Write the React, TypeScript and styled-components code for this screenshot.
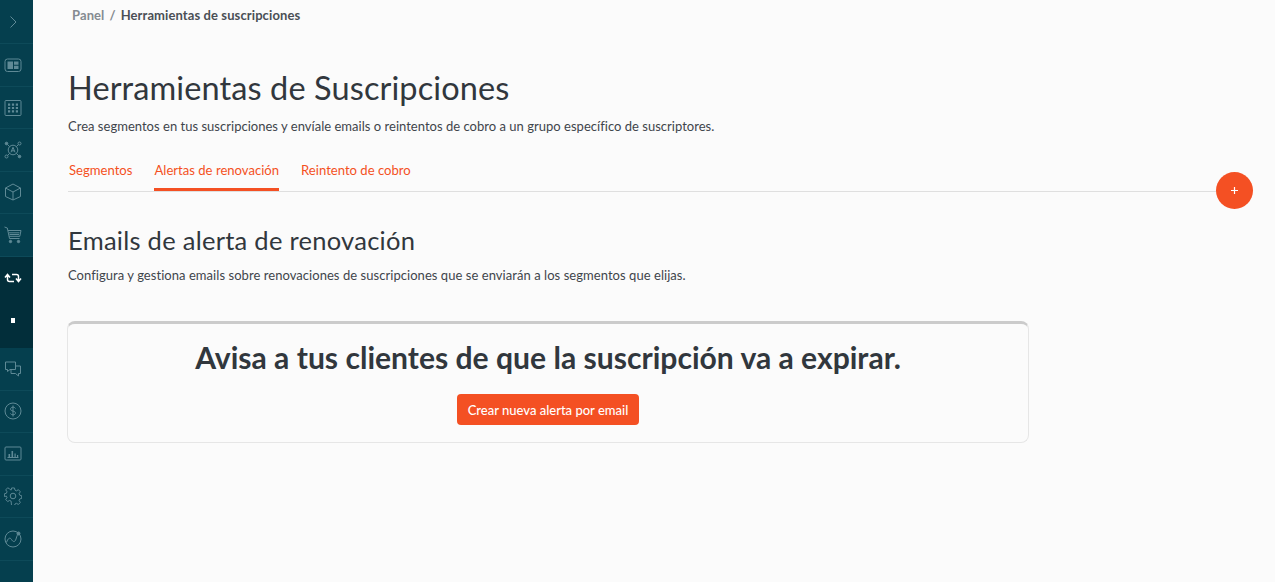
import React from 'react'
import styled, { createGlobalStyle } from 'styled-components'

const GlobalStyle = createGlobalStyle`
  html, body {
    margin: 0;
    padding: 0;
    height: 100%;
    background: #fbfbfb;
    font-family: "Lato", "Open Sans", sans-serif;
  }
  * { box-sizing: border-box; }
`

const Page = styled.div`
  display: flex;
  width: 1275px;
  height: 582px;
  overflow: hidden;
  background: #fbfbfb;
`

const Sidebar = styled.nav`
  flex: 0 0 33px;
  display: flex;
  flex-direction: column;
  background: #053f4e;
`

const NavItem = styled.div<{ $h?: number }>`
  flex: 0 0 ${_ => _.$h ?? 42.5}px;
  display: flex;
  align-items: center;
  justify-content: center;
  padding-right: 8px;
  border-bottom: 1px solid #0d4a59;
  color: #5f8a96;
`

const ActiveGroup = styled.div`
  flex: 0 0 91px;
  display: flex;
  flex-direction: column;
  background: #022e3a;
  color: #fff;
`

const ActiveItem = styled.div`
  flex: 0 0 42px;
  display: flex;
  align-items: center;
  justify-content: center;
  padding-right: 8px;
`

const Dot = styled.span`
  width: 4px;
  height: 5px;
  background: #fff;
`

const Main = styled.main`
  flex: 1;
  min-width: 0;
  padding: 0 59px 0 35px;
`

const Breadcrumb = styled.div`
  height: 30px;
  padding-left: 4px;
  display: flex;
  align-items: center;
  gap: 5px;
  font-size: 13px;
  font-weight: 700;
  letter-spacing: 0.1px;
  color: #4a4f55;
`

const Crumb = styled.span`
  color: #858b91;
`

const Title = styled.h1`
  margin: 35px 0 0;
  font-size: 32.5px;
  line-height: 46px;
  font-weight: 400;
  letter-spacing: 0.1px;
  color: #31373d;
`

const Lead = styled.p`
  margin: 6px 0 0;
  font-size: 13px;
  line-height: 18px;
  letter-spacing: 0.02px;
  color: #3f454b;
`

const TabBar = styled.div`
  position: relative;
  margin-top: 18px;
  height: 39px;
  display: flex;
  gap: 22px;
  border-bottom: 1px solid #dfdfdf;
  padding-left: 1px;
`

const Tab = styled.a<{ $active?: boolean }>`
  height: 38px;
  padding-top: 8px;
  font-size: 13.1px;
  line-height: 18px;
  color: #f4511e;
  border-bottom: 3px solid ${_ => (_.$active ? '#f45023' : 'transparent')};
`

const Fab = styled.button`
  position: absolute;
  right: -37px;
  top: 19px;
  width: 37px;
  height: 37px;
  padding: 0;
  border: 0;
  border-radius: 50%;
  background: #f45023;
  color: #fff;
  display: flex;
  align-items: center;
  justify-content: center;
`

const SectionTitle = styled.h2`
  margin: 30px 0 0;
  font-size: 25.5px;
  line-height: 36px;
  font-weight: 400;
  letter-spacing: 0.27px;
  color: #31373d;
`

const SectionLead = styled(Lead)`
  margin-top: 8px;
  letter-spacing: 0.05px;
`

const Card = styled.section`
  width: 962px;
  height: 122px;
  margin: 37px 0 0 -1px;
  border: 1px solid #e6e6e6;
  border-top: 3px solid #cbcbcb;
  border-radius: 8px;
  display: flex;
  flex-direction: column;
  align-items: center;
`

const CardTitle = styled.h3`
  margin: 12px 0 0;
  font-size: 30.1px;
  line-height: 42px;
  font-weight: 700;
  color: #31373d;
`

const PrimaryButton = styled.button`
  margin-top: 16px;
  width: 182px;
  height: 31px;
  border: 0;
  border-radius: 4px;
  background: #f45023;
  color: #fff;
  font-family: inherit;
  font-size: 13px;
  font-weight: 500;
`

const Glyph = styled.svg.attrs({
  viewBox: '0 0 18 18',
  fill: 'none',
  stroke: 'currentColor',
  strokeWidth: 1,
})`
  width: 18px;
  height: 18px;
  display: block;
`

const RepeatGlyph = styled(Glyph)`
  stroke-width: 1.5;
`

const Icons: Record<string, React.ReactNode> = {
  chevron: <path d="M6.500 3.500L12 9l-5.500 5.500" />,
  panel: (
    <>
      <rect x="1" y="3" width="16" height="12.500" rx="2.500" />
      <path d="M3.500 5.500h5.500v7.500H3.500zM10 5.500h4.500v3.200H10zM10 9.800h4.500V13H10z" fill="currentColor" stroke="none" />
    </>
  ),
  grid: (
    <>
      <rect x="1" y="1.500" width="16" height="15" rx="1" />
      <path d="M4 4.500h2.200v2.200H4zM7.900 4.500h2.200v2.200H7.900zM11.800 4.500H14v2.200h-2.200zM4 7.900h2.200v2.200H4zM7.900 7.900h2.200v2.200H7.900zM11.800 7.900H14v2.200h-2.200zM4 11.300h2.200v2.200H4zM7.900 11.300h2.200v2.200H7.900zM11.800 11.300H14v2.200h-2.200z" fill="currentColor" stroke="none" />
    </>
  ),
  atom: (
    <>
      <circle cx="9" cy="9" r="4.800" />
      <path d="M7 11.300L9 6.300l2 5M7.700 9.800h2.600" />
      <circle cx="2.500" cy="2.500" r="1.300" fill="currentColor" />
      <circle cx="15.500" cy="2.500" r="1.500" />
      <circle cx="2.500" cy="15.500" r="1.500" />
      <circle cx="15.500" cy="15.500" r="1.300" fill="currentColor" />
      <path d="M3.500 3.500l2.200 2.200M14.400 3.600l-2.100 2.100M3.600 14.400l2.100-2.100M14.500 14.500l-2.200-2.200" />
    </>
  ),
  box: <path d="M9 1l7.500 4v8.500L9 17l-7.500-3.500V5zM1.500 5L9 9l7.500-4M9 9v8" strokeLinejoin="round" />,
  cart: (
    <>
      <path d="M0.500 1l2.800 1 2.200 10.500h10M4 4.500h13l-1.200 5.800H5.200M5 6.800h10.500M5.500 8.500h9.500" />
      <circle cx="6.500" cy="15.500" r="1.200" fill="currentColor" />
      <circle cx="14.500" cy="15.500" r="1.200" fill="currentColor" />
    </>
  ),
  chat: <path d="M1.500 2h10v7.500H6l-2.500 2v-2h-2zM11.500 6h5v7.500h-2v2.500l-3-2.500H7V9.500" strokeLinejoin="round" />,
  money: (
    <>
      <circle cx="9" cy="9" r="8" />
      <path d="M11.500 6.500C11 5.500 10 5.200 9 5.200 7.500 5.200 6.500 6 6.500 7.200c0 2.600 5 1.200 5 3.700 0 1.200-1 1.900-2.500 1.900-1.200 0-2.100-.4-2.600-1.300M9 3.500v11" />
    </>
  ),
  chart: (
    <>
      <rect x="1" y="2" width="16" height="13" rx="1" />
      <path d="M4.500 12V9h1.600v3zM7.500 12V6h1.600v6zM10.500 12V8.500h1.200V12zM13 12v-2h1.200v2z" fill="currentColor" stroke="none" />
      <path d="M3.500 12.500h11" />
    </>
  ),
  gear: (
    <>
      <circle cx="9" cy="9" r="2.800" />
      <path d="M7.500 1h3l.5 2.300 1.600.7 2-1.200 2 2.200-1.300 1.900.6 1.600 2.100.6v2.800l-2.100.6-.6 1.600 1.300 1.900-2 2.200-2-1.200-1.600.7-.5 2.200h-3L7 14.700l-1.600-.7-2 1.200-2-2.200 1.300-1.900-.6-1.600L0 9.900V7.100l2.100-.6.6-1.600L1.400 3l2-2.200 2 1.200L7 3.300z" transform="translate(.4 0) scale(.96)" strokeLinejoin="round" />
    </>
  ),
  trend: (
    <>
      <circle cx="9" cy="9" r="8" />
      <path d="M2.500 12.500C4 8 6 7 7.500 9.500s3.500 3 4.500-.5 1.500-4 2-5" />
      <circle cx="14.500" cy="3.500" r="1.500" fill="currentColor" />
    </>
  ),
}

const top = [
  { key: 'chevron', h: 44 },
  { key: 'panel', h: 43 },
  { key: 'grid', h: 42 },
  { key: 'atom', h: 42.5 },
  { key: 'box', h: 42.5 },
  { key: 'cart', h: 43 },
]
const bottom = ['chat', 'money', 'chart', 'gear', 'trend']

export default function App() {
  return (
    <Page>
      <GlobalStyle />
      <Sidebar>
        {top.map(item => (
          <NavItem key={item.key} $h={item.h}>
            <Glyph>{Icons[item.key]}</Glyph>
          </NavItem>
        ))}
        <ActiveGroup>
          <ActiveItem>
            <RepeatGlyph>
              <path d="M1 8.500L3.500 5.500 6 8.500M3.500 6v4.500a2 2 0 0 0 2 2H10M17 9.500l-2.500 3-2.500-3M14.500 12V7.500a2 2 0 0 0-2-2H8" />
            </RepeatGlyph>
          </ActiveItem>
          <ActiveItem><Dot /></ActiveItem>
        </ActiveGroup>
        {bottom.map(key => (
          <NavItem key={key}>
            <Glyph>{Icons[key]}</Glyph>
          </NavItem>
        ))}
      </Sidebar>
      <Main>
        <Breadcrumb>
          <Crumb>Panel</Crumb>
          <Crumb>/</Crumb>
          <span>Herramientas de suscripciones</span>
        </Breadcrumb>
        <Title>Herramientas de Suscripciones</Title>
        <Lead>Crea segmentos en tus suscripciones y envíale emails o reintentos de cobro a un grupo específico de suscriptores.</Lead>
        <TabBar>
          <Tab>Segmentos</Tab>
          <Tab $active>Alertas de renovación</Tab>
          <Tab>Reintento de cobro</Tab>
          <Fab aria-label="Añadir">
            <svg width="9" height="9" viewBox="0 0 9 9" stroke="currentColor" strokeWidth="1.2">
              <path d="M4.500 1v7M1 4.500h7" />
            </svg>
          </Fab>
        </TabBar>
        <SectionTitle>Emails de alerta de renovación</SectionTitle>
        <SectionLead>Configura y gestiona emails sobre renovaciones de suscripciones que se enviarán a los segmentos que elijas.</SectionLead>
        <Card>
          <CardTitle>Avisa a tus clientes de que la suscripción va a expirar.</CardTitle>
          <PrimaryButton>Crear nueva alerta por email</PrimaryButton>
        </Card>
      </Main>
    </Page>
  )
}
